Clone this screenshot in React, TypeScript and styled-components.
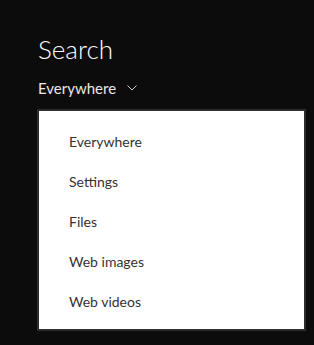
import React from 'react';
import { styled, createGlobalStyle } from 'styled-components';

const GlobalStyle = createGlobalStyle`
  html, body {
    margin: 0;
    padding: 0;
    background: #0c0c0c;
    font-family: Lato, 'Open Sans', sans-serif;
  }
`;

const Panel = styled.div`
  width: 314px;
  height: 345px;
  box-sizing: border-box;
  padding: 33px 0 0 38px;
  background: #0c0c0c;
  color: #fff;
  display: flex;
  flex-direction: column;
`;

const Title = styled.h1`
  margin: 0;
  font-size: 26px;
  font-weight: 300;
  line-height: 32px;
`;

const ScopeButton = styled.button`
  display: flex;
  align-items: center;
  gap: 11px;
  margin: 13px 0 0 0;
  padding: 0;
  border: none;
  background: none;
  color: #e8e8e8;
  font-family: inherit;
  font-size: 15px;
  line-height: 20px;
  width: fit-content;
`;

const Menu = styled.ul`
  list-style: none;
  margin: 11px 0 0 -1px;
  padding: 10px 0 8px 30px;
  width: 269px;
  height: 222px;
  box-sizing: border-box;
  background: #fff;
  border: 2px solid #2d2d2d;
  display: flex;
  flex-direction: column;
`;

const Item = styled.li`
  height: 40px;
  flex: none;
  display: flex;
  align-items: center;
  font-size: 14px;
  color: #333;
`;

const items = ['Everywhere', 'Settings', 'Files', 'Web images', 'Web videos'];

export default function App() {
  return (
    <>
      <GlobalStyle />
      <Panel>
        <Title>Search</Title>
        <ScopeButton>
          Everywhere
          <svg width="10" height="6" viewBox="0 0 10 6" fill="none">
            <path d="M0.5 0.5 L5 5 L9.5 0.5" stroke="#ccc" strokeWidth="1" />
          </svg>
        </ScopeButton>
        <Menu>
          {items.map((item) => (
            <Item key={item}>{item}</Item>
          ))}
        </Menu>
      </Panel>
    </>
  );
}
